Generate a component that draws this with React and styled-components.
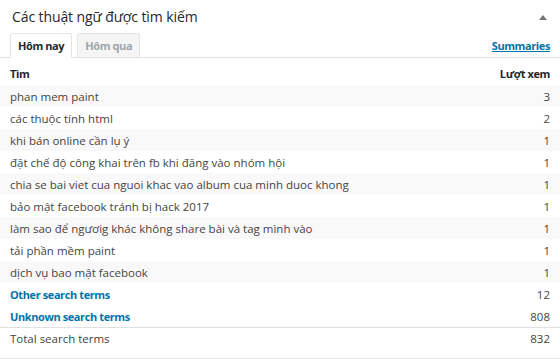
import React, { useState } from "react";
import styled, { createGlobalStyle, css } from "styled-components";

const GlobalStyle = createGlobalStyle`
  body {
    margin: 0;
    background: #fff;
    font-family: "Open Sans", "Noto Sans", sans-serif;
    color: #32373c;
  }
`;

// Segoe-like bold is narrower than Open Sans, so tighten it a bit
const strong = css`
  font-size: 11px;
  font-weight: 700;
  letter-spacing: -0.4px;
`;

const Card = styled.div`
  width: 560px;
  border-bottom: 1px solid #e5e5e5;
`;

const Header = styled.div`
  height: 33px;
  display: flex;
  align-items: center;
  justify-content: space-between;
  padding: 0 13px 0 12px;
`;

const Title = styled.h2`
  margin: 0;
  font-size: 14px;
  font-weight: 400;
  color: #23282d;
  letter-spacing: -0.1px;
`;

const Toggle = styled.span`
  width: 0;
  height: 0;
  border-left: 4px solid transparent;
  border-right: 4px solid transparent;
  border-bottom: 5px solid #72777c;
  margin-top: 1px;
`;

const Toolbar = styled.div`
  height: 24px;
  display: flex;
  align-items: flex-end;
  gap: 5px;
  padding: 0 10px;
  border-bottom: 1px solid #e1e1e1;
`;

const Tab = styled.button`
  height: 25px;
  margin-bottom: -1px;
  padding: 0 7px;
  border: 1px solid #e5e5e5;
  border-bottom: ${(p) => (p.$active ? "1px solid #fff" : "1px solid #e1e1e1")};
  border-radius: 3px 3px 0 0;
  background: ${(p) => (p.$active ? "#fff" : "#f5f5f5")};
  color: ${(p) => (p.$active ? "#23282d" : "#a0a5aa")};
  font-family: inherit;
  ${strong}
  cursor: pointer;
`;

const Summaries = styled.a`
  margin-left: auto;
  align-self: center;
  color: #0073aa;
  ${strong}
  text-decoration: underline;
  cursor: pointer;
`;

const Table = styled.div`
  display: flex;
  flex-direction: column;
  padding-top: 4px;
`;

const Row = styled.div`
  height: 22px;
  display: flex;
  align-items: center;
  justify-content: space-between;
  padding: 0 10px;
  font-size: 11.5px;
  background: ${(p) => (p.$striped ? "#f9f9f9" : "transparent")};
  border-top: ${(p) => (p.$divider ? "1px solid #e1e1e1" : "none")};
`;

const HeadRow = styled(Row)`
  height: 23px;
  color: #23282d;
  ${strong}
`;

const TotalRow = styled(Row)`
  height: 31px;
  align-items: flex-start;
  padding-top: 3px;
  box-sizing: border-box;
`;

const Term = styled.span`
  color: #444;
  white-space: nowrap;
  ${(p) =>
    p.$link &&
    css`
      color: #0073aa;
      ${strong}
    `}
`;

const Count = styled.span`
  color: #444;
`;

const terms = [
  ["phan mem paint", 3],
  ["các thuộc tính html", 2],
  ["khi bán online cần lụ ý", 1],
  ["đặt chế độ công khai trên fb khi đăng vào nhóm hội", 1],
  ["chia se bai viet cua nguoi khac vao album cua minh duoc khong", 1],
  ["bảo mật facebook tránh bị hack 2017", 1],
  ["làm sao để ngươig khác không share bài và tag mình vào", 1],
  ["tải phần mềm paint", 1],
  ["dịch vụ bao mật facebook", 1],
];

export default function App() {
  const [tab, setTab] = useState(0);
  return (
    <>
      <GlobalStyle />
      <Card>
        <Header>
          <Title>Các thuật ngữ được tìm kiếm</Title>
          <Toggle />
        </Header>
        <Toolbar>
          <Tab $active={tab === 0} onClick={() => setTab(0)}>Hôm nay</Tab>
          <Tab $active={tab === 1} onClick={() => setTab(1)}>Hôm qua</Tab>
          <Summaries>Summaries</Summaries>
        </Toolbar>
        <Table>
          <HeadRow>
            <span>Tìm</span>
            <span>Lượt xem</span>
          </HeadRow>
          {terms.map(([t, n], i) => (
            <Row key={t} $striped={i % 2 === 0}>
              <Term>{t}</Term>
              <Count>{n}</Count>
            </Row>
          ))}
          <Row>
            <Term $link>Other search terms</Term>
            <Count>12</Count>
          </Row>
          <Row>
            <Term $link>Unknown search terms</Term>
            <Count>808</Count>
          </Row>
          <TotalRow $divider>
            <Term>Total search terms</Term>
            <Count>832</Count>
          </TotalRow>
        </Table>
      </Card>
    </>
  );
}
